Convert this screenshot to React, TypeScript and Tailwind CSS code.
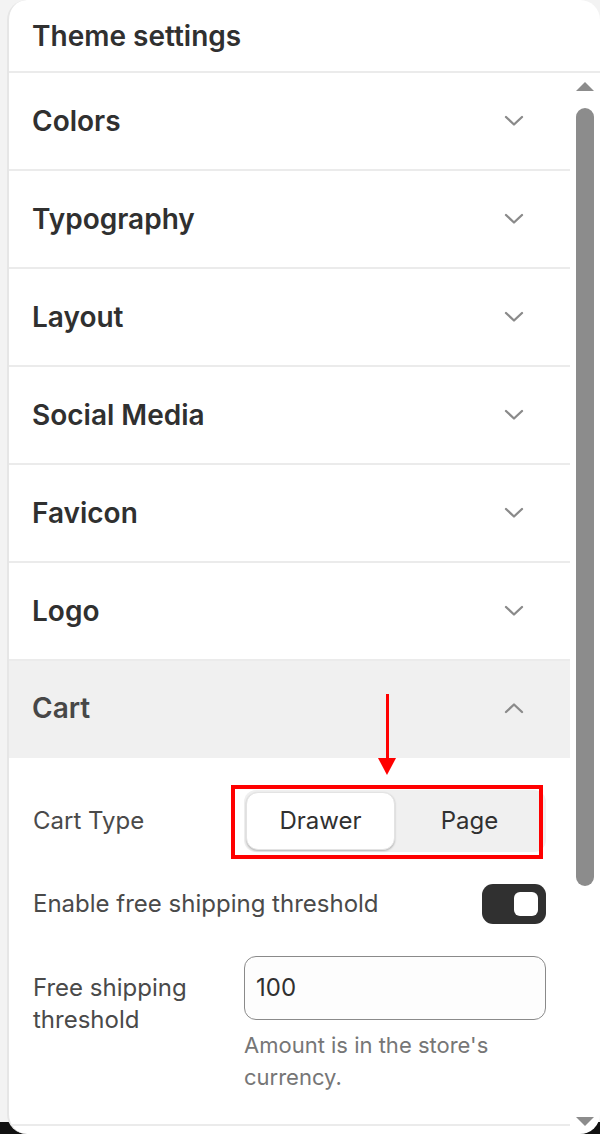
import React from "react";

const Chevron = ({ up = false }: { up?: boolean }) => (
  <svg width="20" height="12" viewBox="0 0 20 12" fill="none" className="shrink-0">
    <path
      d={up ? "M2 10 L10 2.5 L18 10" : "M2 2 L10 9.5 L18 2"}
      stroke="#8a8a8a"
      strokeWidth="2.3"
      strokeLinecap="round"
      strokeLinejoin="round"
    />
  </svg>
);

const sections = ["Colors", "Typography", "Layout", "Social Media", "Favicon", "Logo"];

export default function App() {
  return (
    <div className="w-[600px] h-[1134px] bg-[linear-gradient(to_bottom,#f3f3f3_1122px,#111_1122px)] pl-[7px] overflow-hidden font-['Inter',sans-serif] text-[#303030]">
      <div className="h-full bg-white rounded-[20px] border-l-2 border-[#e6e6e6] flex flex-col overflow-hidden">
        <div className="h-[73px] shrink-0 pl-[23px] flex items-center border-b-2 border-[#ebebeb] text-[28px] font-semibold">
          Theme settings
        </div>
        <div className="flex flex-1 min-h-0">
          <div className="w-[561px] shrink-0 flex flex-col">
            {sections.map((s) => (
              <div
                key={s}
                className="h-[98px] shrink-0 flex items-center justify-between pl-[23px] pr-[46px] border-b-2 border-[#ebebeb]"
              >
                <span className="text-[28px] font-semibold">{s}</span>
                <Chevron />
              </div>
            ))}
            <div className="h-[97px] shrink-0 flex items-center justify-between pl-[23px] pr-[46px] pb-[3px] bg-[#f0f0f0] relative">
              <span className="text-[28px] font-semibold text-[#474747]">Cart</span>
              <Chevron up />
              <div className="absolute left-[369px] top-[33px] flex flex-col items-center">
                <div className="w-[3px] h-[64px] bg-[#ff0000]" />
                <div className="w-0 h-0 border-l-[9px] border-r-[9px] border-t-[17px] border-l-transparent border-r-transparent border-t-[#ff0000]" />
              </div>
            </div>
            <div className="flex flex-col pl-[24px] pr-[24px] pt-[31px] text-[24px] text-[#4a4a4a]">
              <div className="flex items-center justify-between h-[64px]">
                <span>Cart Type</span>
                <div className="relative w-[302px] h-[62px] bg-[#f0f0f0] rounded-[12px] p-[2px] flex">
                  <div className="w-[149px] h-[58px] bg-white rounded-[12px] border border-[#e3e3e3] shadow-[0_1px_2px_rgba(0,0,0,0.25)] flex items-center justify-center text-[#303030]">
                    Drawer
                  </div>
                  <div className="flex-1 flex items-center justify-center text-[#303030]">Page</div>
                  <div className="absolute left-[-13px] top-[-5px] w-[312px] h-[74px] border-4 border-[#ff0000] pointer-events-none" />
                </div>
              </div>
              <div className="flex items-center justify-between mt-[31px] h-[40px]">
                <span>Enable free shipping threshold</span>
                <div className="w-[64px] h-[40px] rounded-[11px] bg-[#303030] flex items-center justify-end pr-[8px]">
                  <div className="w-[24px] h-[24px] rounded-[6px] bg-white" />
                </div>
              </div>
              <div className="flex justify-between mt-[32px]">
                <div className="leading-[32px] pt-[16px] w-[190px]">Free shipping threshold</div>
                <div className="w-[302px] flex flex-col">
                  <div className="h-[64px] rounded-[12px] border border-[#8a8a8a] bg-[#fdfdfd] flex items-center pl-[11px] text-[#303030]">
                    100
                  </div>
                  <div className="mt-[9px] leading-[32px] text-[22px] text-[#767676]">
                    Amount is in the store's currency.
                  </div>
                </div>
              </div>
            </div>
            <div className="flex-1" />
            <div className="h-[2px] bg-[#ebebeb] mb-[8px]" />
          </div>
          <div className="flex-1 flex flex-col items-center pt-[9px] pb-[8px]">
            <div className="w-0 h-0 border-l-[9px] border-r-[9px] border-b-[9px] border-l-transparent border-r-transparent border-b-[#8c8c8c]" />
            <div className="w-[18px] h-[778px] mt-[17px] rounded-[9px] bg-[#8c8c8c]" />
            <div className="flex-1" />
            <div className="w-0 h-0 border-l-[9px] border-r-[9px] border-t-[9px] border-l-transparent border-r-transparent border-t-[#8c8c8c]" />
          </div>
        </div>
      </div>
    </div>
  );
}
